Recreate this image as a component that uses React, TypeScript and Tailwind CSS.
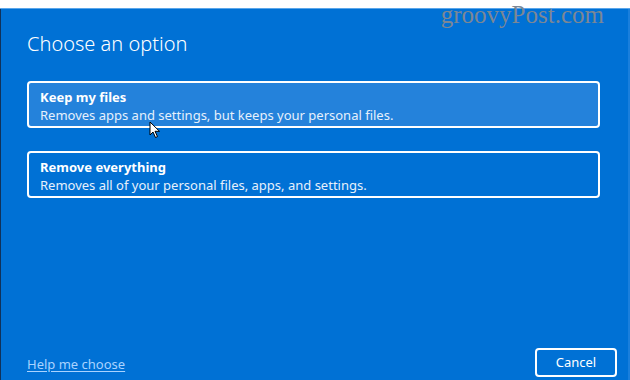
import React from "react";

const sans = { fontFamily: '"Noto Sans", "Open Sans", sans-serif' };

function Option({ title, desc, hover = false }: { title: string; desc: string; hover?: boolean }) {
  return (
    <button
      type="button"
      className={`flex h-[47px] w-[573px] flex-col justify-center rounded-[4px] border-2 border-white pl-[11px] pt-[3px] text-left text-white ${
        hover ? "bg-[#2482db]" : "bg-transparent"
      }`}
    >
      <span className="text-[13px] font-bold leading-[17px]">{title}</span>
      <span className="text-[13px] leading-[18px] text-[#e6f0fb]">{desc}</span>
    </button>
  );
}

// Mouse pointer sitting over the first option.
function Cursor() {
  return (
    <svg
      className="pointer-events-none absolute left-[149px] top-[121px]"
      width="12"
      height="18"
      viewBox="0 0 12 18"
    >
      <path
        d="M1 1 L1 14 L4 11 L6.5 16.5 L8.5 15.6 L6 10.3 L10.5 10.3 Z"
        fill="#fff"
        stroke="#000"
        strokeWidth="1"
        strokeLinejoin="round"
      />
    </svg>
  );
}

export default function App() {
  return (
    <div className="relative flex h-[380px] w-[630px] flex-col overflow-hidden bg-white" style={sans}>
      <div className="h-2 shrink-0 bg-white" />
      <div className="h-px shrink-0 bg-[#5aa6ea]" />
      <main className="flex min-h-0 flex-1 flex-col border-l border-l-[#10325a] border-r-2 border-r-[#1a7fdc] bg-[#0071d5] pl-[26px] pr-[11px]">
        <h1 className="mt-[22px] text-[20px] font-light leading-[26px] text-white">Choose an option</h1>
        <div className="mt-[24px] flex flex-col gap-[23px]">
          <Option
            hover
            title="Keep my files"
            desc="Removes apps and settings, but keeps your personal files."
          />
          <Option
            title="Remove everything"
            desc="Removes all of your personal files, apps, and settings."
          />
        </div>
        <div className="flex-1" />
        <footer className="mb-[3px] flex items-center justify-between">
          <a href="#" className="mt-[4px] text-[13px] text-[#a9d3ff] underline underline-offset-2">
            Help me choose
          </a>
          <button
            type="button"
            className="h-[29px] w-[82px] rounded-[4px] border-2 border-white text-[13px] text-white"
          >
            Cancel
          </button>
        </footer>
      </main>
      <Cursor />
      <span
        className="pointer-events-none absolute right-[26px] top-[-4px] text-[25px] text-[#7c8794]"
        style={{ fontFamily: '"Liberation Serif", serif' }}
      >
        groovyPost.com
      </span>
    </div>
  );
}
